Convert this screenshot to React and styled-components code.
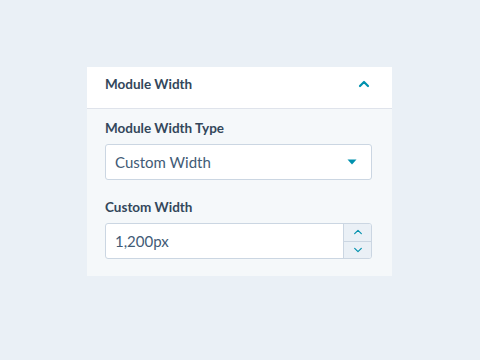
import React from 'react';
import styled, {createGlobalStyle} from 'styled-components';

const GlobalStyle = createGlobalStyle`
    html, body {
        margin: 0;
        background: #eaf0f6;
    }
    body {
        font-family: 'Lato', 'Noto Sans', sans-serif;
        color: #33475b;
    }
`;

const Page = styled.div`
    display: flex;
    align-items: flex-start;
    height: 360px;
    padding: 67px 0 0 87px;
    box-sizing: border-box;
`;

const Panel = styled.section`
    width: 305px;
    background: #f5f8fa;
    padding-bottom: 17px;
`;

const Header = styled.div`
    display: flex;
    align-items: center;
    justify-content: space-between;
    height: 42px;
    box-sizing: border-box;
    padding: 0 22px 8px 18px;
    background: #ffffff;
    border-bottom: 1px solid #dfe3eb;
`;

const Title = styled.h3`
    margin: 0;
    font-size: 13.5px;
    font-weight: 700;
    color: #33475b;
`;

const Body = styled.div`
    padding: 10px 20px 0 18px;
    display: flex;
    flex-direction: column;
    gap: 18px;
`;

const Field = styled.div`
    display: flex;
    flex-direction: column;
    gap: 7px;
`;

const Label = styled.label`
    font-size: 13.5px;
    font-weight: 700;
    line-height: 18px;
    color: #33475b;
`;

const Box = styled.div`
    display: flex;
    align-items: stretch;
    height: 36px;
    box-sizing: border-box;
    background: #ffffff;
    border: 1px solid #cbd6e2;
    border-radius: 3px;
    overflow: hidden;
`;

const Value = styled.span`
    flex: 1;
    display: flex;
    align-items: center;
    padding-left: 9px;
    font-size: 15px;
    color: #425b76;
`;

const Caret = styled.span`
    display: flex;
    align-items: center;
    padding-right: 14px;
`;

const Stepper = styled.div`
    width: 27px;
    display: flex;
    flex-direction: column;
    border-left: 1px solid #cbd6e2;
    background: #eaf0f6;
`;

const StepButton = styled.button`
    flex: 1;
    display: flex;
    align-items: center;
    justify-content: center;
    padding: 0;
    border: none;
    background: transparent;
    border-top: ${p => (p.$down ? '1px solid #cbd6e2' : 'none')};
`;

const Chevron = ({up, size = 12, width = 2}) => (
    <svg width={size} height={size} viewBox="0 0 12 12" fill="none">
        <path
            d={up ? 'M2 8 L6 4 L10 8' : 'M2 4 L6 8 L10 4'}
            stroke="#0091ae"
            strokeWidth={width}
            strokeLinecap="round"
            strokeLinejoin="round"
        />
    </svg>
);

const App = () => {
    return (
        <>
            <GlobalStyle />
            <Page>
                <Panel>
                    <Header>
                        <Title>Module Width</Title>
                        <Chevron up size={12} width={2.2} />
                    </Header>
                    <Body>
                        <Field>
                            <Label>Module Width Type</Label>
                            <Box>
                                <Value>Custom Width</Value>
                                <Caret>
                                    <svg width="10" height="6" viewBox="0 0 10 6">
                                        <path d="M0.5 0.5 L9.5 0.5 L5 5.5 Z" fill="#0091ae" />
                                    </svg>
                                </Caret>
                            </Box>
                        </Field>
                        <Field>
                            <Label>Custom Width</Label>
                            <Box>
                                <Value>1,200px</Value>
                                <Stepper>
                                    <StepButton><Chevron up size={10} width={1.4} /></StepButton>
                                    <StepButton $down><Chevron size={10} width={1.4} /></StepButton>
                                </Stepper>
                            </Box>
                        </Field>
                    </Body>
                </Panel>
            </Page>
        </>
    );
};

export default App;
